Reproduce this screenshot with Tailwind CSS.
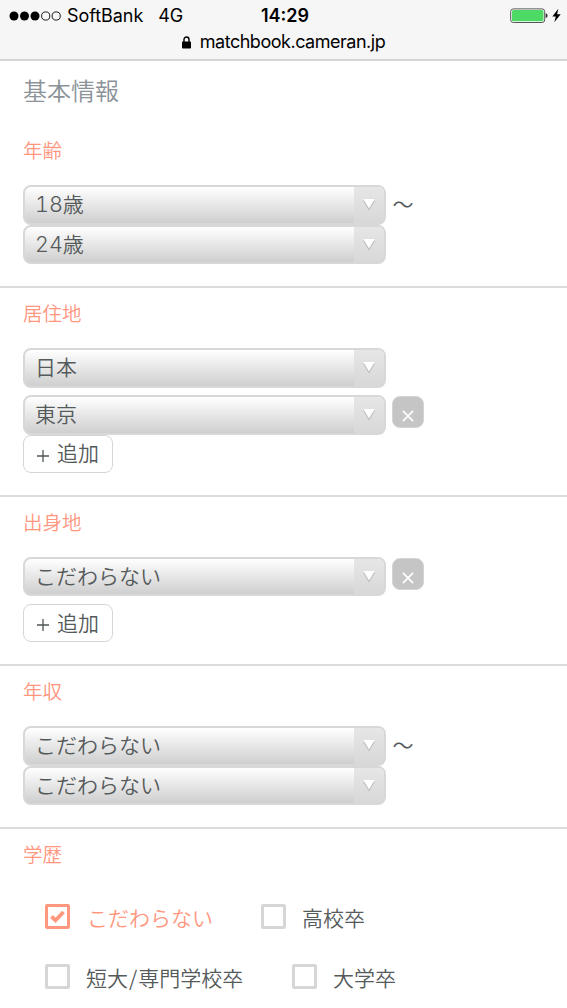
<!DOCTYPE html>
<html lang="ja">
<head>
<meta charset="utf-8">
<title>基本情報</title>
<script src="https://cdn.jsdelivr.net/npm/@tailwindcss/browser@4"></script>
</head>
<body class="h-[1008px] w-[567px] overflow-hidden bg-white font-['Noto_Sans_CJK_JP',sans-serif] text-[21px] font-[350] leading-none text-[#555a5b]">
<svg class="hidden">
  <symbol id="arrow" viewBox="0 0 14 13"><path d="M1 2.5h12L7 12.5z" fill="#bcbcbc"/><path d="M1.3 1h11.4L7 10.5z" fill="#fff"/></symbol>
  <symbol id="cross" viewBox="0 0 12 12"><path d="M.9.9l10.2 10.2M11.1.9L.9 11.1" stroke="#fff" stroke-width="1.7" fill="none"/></symbol>
</svg>
<header class="h-[61px] border-b-2 border-[#d5d5d6] bg-[#f6f6f7] font-[Inter,sans-serif] font-normal text-black">
  <div class="grid h-[31px] grid-cols-3 items-center pl-[9px] pr-[6px]">
    <div class="flex items-center whitespace-nowrap text-[18px] tracking-[-0.05px]">
      <svg class="mr-[6px] shrink-0" width="52" height="10" viewBox="0 0 52 10"><g><circle cx="5" cy="5" r="4.5"/><circle cx="15.5" cy="5" r="4.5"/><circle cx="26" cy="5" r="4.5"/></g><g fill="none" stroke="#000" stroke-width=".9"><circle cx="36.7" cy="5" r="4.1"/><circle cx="47.2" cy="5" r="4.1"/></g></svg>
      <span>SoftBank</span><span class="ml-[15px]">4G</span>
    </div>
    <div class="text-center text-[18px] font-semibold">14:29</div>
    <div class="flex items-center justify-end gap-1">
      <svg width="38" height="16" viewBox="0 0 38 16"><rect x=".7" y=".9" width="34" height="13.6" rx="2.6" fill="#fff" stroke="#555" stroke-width="1"/><rect x="1.9" y="2.1" width="31.6" height="11.2" rx="1.6" fill="#4cd964"/><path d="M35.6 5.3q2 .4 2 2.4t-2 2.4z" fill="#333"/></svg>
      <svg width="9" height="15" viewBox="0 0 9 15"><path d="M6.3.8L.4 8.5h3.4L2.3 14.2 8.7 6.3H5.1z"/></svg>
    </div>
  </div>
  <div class="flex h-[22px] items-center justify-center gap-[9px] text-[18px] tracking-[-0.48px]">
    <svg width="9" height="13" viewBox="0 0 9 13"><path d="M2 6V3.5a2.5 2.5 0 015 0V6" fill="none" stroke="#000" stroke-width="1.4"/><rect y="5.4" width="9" height="7.2" rx=".8"/></svg>
    <span>matchbook.cameran.jp</span>
  </div>
</header>

<main>
  <section class="h-[227px] border-b-2 border-[#dcdcdc] px-[23px] pt-[16px]">
    <h1 class="text-[24px] leading-[26px] text-[#8b9399]">基本情報</h1>
    <h2 class="mt-[35px] text-[19.5px] leading-6 text-[#ff977f]">年齢</h2>
    <div class="mt-[23px] flex gap-[7px]">
      <div>
        <div class="flex h-[39.5px] w-[362.5px] overflow-hidden rounded-lg border-2 border-[#d8d8d8] bg-linear-to-b from-white to-[#cfcfcf]"><span class="flex-1 pl-[10px] leading-[33px]"><span class="font-[Inter,sans-serif] text-[21.5px] font-light tabular-nums">18</span>歳</span><span class="flex w-[30px] items-center justify-center bg-linear-to-b from-[#e6e6e6] to-[#d8d8d8]"><svg class="h-[13px] w-[14px]"><use href="#arrow"/></svg></span></div>
        <div class="flex h-[39.5px] w-[362.5px] overflow-hidden rounded-lg border-2 border-[#d8d8d8] bg-linear-to-b from-white to-[#cfcfcf]"><span class="flex-1 pl-[10px] leading-[33px]"><span class="font-[Inter,sans-serif] text-[21.5px] font-light tabular-nums">24</span>歳</span><span class="flex w-[30px] items-center justify-center bg-linear-to-b from-[#e6e6e6] to-[#d8d8d8]"><svg class="h-[13px] w-[14px]"><use href="#arrow"/></svg></span></div>
      </div>
      <span class="leading-[37px]">〜</span>
    </div>
  </section>

  <section class="h-[209px] border-b-2 border-[#dcdcdc] px-[23px] pt-[13px]">
    <h2 class="text-[19.5px] leading-6 text-[#ff977f]">居住地</h2>
    <div class="mt-[23px] flex h-[39.5px] w-[362.5px] overflow-hidden rounded-lg border-2 border-[#d8d8d8] bg-linear-to-b from-white to-[#cfcfcf]"><span class="flex-1 pl-[10px] leading-[33px]">日本</span><span class="flex w-[30px] items-center justify-center bg-linear-to-b from-[#e6e6e6] to-[#d8d8d8]"><svg class="h-[13px] w-[14px]"><use href="#arrow"/></svg></span></div>
    <div class="mt-[7.5px] flex gap-[6.5px]">
      <div class="flex h-[39.5px] w-[362.5px] overflow-hidden rounded-lg border-2 border-[#d8d8d8] bg-linear-to-b from-white to-[#cfcfcf]"><span class="flex-1 pl-[10px] leading-[33px]">東京</span><span class="flex w-[30px] items-center justify-center bg-linear-to-b from-[#e6e6e6] to-[#d8d8d8]"><svg class="h-[13px] w-[14px]"><use href="#arrow"/></svg></span></div>
      <button class="mt-[1px] flex size-8 justify-center rounded-lg border border-[#d4d4d4] bg-[#c5c5c5] pt-[13px]"><svg class="size-3"><use href="#cross"/></svg></button>
    </div>
    <button class="flex h-[38px] w-[90px] items-center justify-center gap-[8px] rounded-lg border-[1.5px] border-[#d6d6d6]"><svg width="12" height="12" viewBox="0 0 12 12" class="mt-[4px]"><path d="M6 0v12M0 6h12" stroke="#4f5455" stroke-width="1.3"/></svg><span class="pb-[2px]">追加</span></button>
  </section>

  <section class="h-[169px] border-b-2 border-[#dcdcdc] px-[23px] pt-[13px]">
    <h2 class="text-[19.5px] leading-6 text-[#ff977f]">出身地</h2>
    <div class="mt-[23px] flex gap-[6.5px]">
      <div class="flex h-[39px] w-[362.5px] overflow-hidden rounded-lg border-2 border-[#d8d8d8] bg-linear-to-b from-white to-[#cfcfcf]"><span class="flex-1 pl-[10px] leading-[33px]">こだわらない</span><span class="flex w-[30px] items-center justify-center bg-linear-to-b from-[#e6e6e6] to-[#d8d8d8]"><svg class="h-[13px] w-[14px]"><use href="#arrow"/></svg></span></div>
      <button class="mt-[1px] flex size-8 justify-center rounded-lg border border-[#d4d4d4] bg-[#c5c5c5] pt-[13px]"><svg class="size-3"><use href="#cross"/></svg></button>
    </div>
    <button class="mt-[8px] flex h-[38px] w-[90px] items-center justify-center gap-[8px] rounded-lg border-[1.5px] border-[#d6d6d6]"><svg width="12" height="12" viewBox="0 0 12 12" class="mt-[4px]"><path d="M6 0v12M0 6h12" stroke="#4f5455" stroke-width="1.3"/></svg><span class="pb-[2px]">追加</span></button>
  </section>

  <section class="h-[163px] border-b-2 border-[#dcdcdc] px-[23px] pt-[13px]">
    <h2 class="text-[19.5px] leading-6 text-[#ff977f]">年収</h2>
    <div class="mt-[23px] flex gap-[7px]">
      <div>
        <div class="flex h-[39.5px] w-[362.5px] overflow-hidden rounded-lg border-2 border-[#d8d8d8] bg-linear-to-b from-white to-[#cfcfcf]"><span class="flex-1 pl-[10px] leading-[33px]">こだわらない</span><span class="flex w-[30px] items-center justify-center bg-linear-to-b from-[#e6e6e6] to-[#d8d8d8]"><svg class="h-[13px] w-[14px]"><use href="#arrow"/></svg></span></div>
        <div class="flex h-[39.5px] w-[362.5px] overflow-hidden rounded-lg border-2 border-[#d8d8d8] bg-linear-to-b from-white to-[#cfcfcf]"><span class="flex-1 pl-[10px] leading-[33px]">こだわらない</span><span class="flex w-[30px] items-center justify-center bg-linear-to-b from-[#e6e6e6] to-[#d8d8d8]"><svg class="h-[13px] w-[14px]"><use href="#arrow"/></svg></span></div>
      </div>
      <span class="leading-[37px]">〜</span>
    </div>
  </section>

  <section class="px-[23px] pt-[13px]">
    <h2 class="text-[19.5px] leading-6 text-[#ff977f]">学歴</h2>
    <div class="mt-[38px] flex pl-[22px]">
      <label class="flex w-[216px] gap-[17px] text-[#ff977f]"><span class="flex size-[25px] items-center justify-center rounded-xs border-3 border-[#ff977f]"><svg width="15" height="13" viewBox="0 0 15 13"><path d="M1.5 6.5l4 3.8 8-8.3" fill="none" stroke="#ff977f" stroke-width="3.8"/></svg></span><span class="pt-[1px] leading-[25px]">こだわらない</span></label>
      <label class="flex gap-[16px]"><span class="size-[25px] rounded-xs border-3 border-[#d6d6d6]"></span><span class="pt-[1px] leading-[25px]">高校卒</span></label>
    </div>
    <div class="mt-[34px] flex pl-[22px]">
      <label class="flex w-[247px] gap-[16px]"><span class="size-[25px] rounded-xs border-3 border-[#d6d6d6]"></span><span class="pt-[1px] leading-[25px]">短大<span class="px-[1px]">/</span>専門学校卒</span></label>
      <label class="flex gap-[16px]"><span class="size-[25px] rounded-xs border-3 border-[#d6d6d6]"></span><span class="pt-[1px] leading-[25px]">大学卒</span></label>
    </div>
  </section>
</main>
</body>
</html>
